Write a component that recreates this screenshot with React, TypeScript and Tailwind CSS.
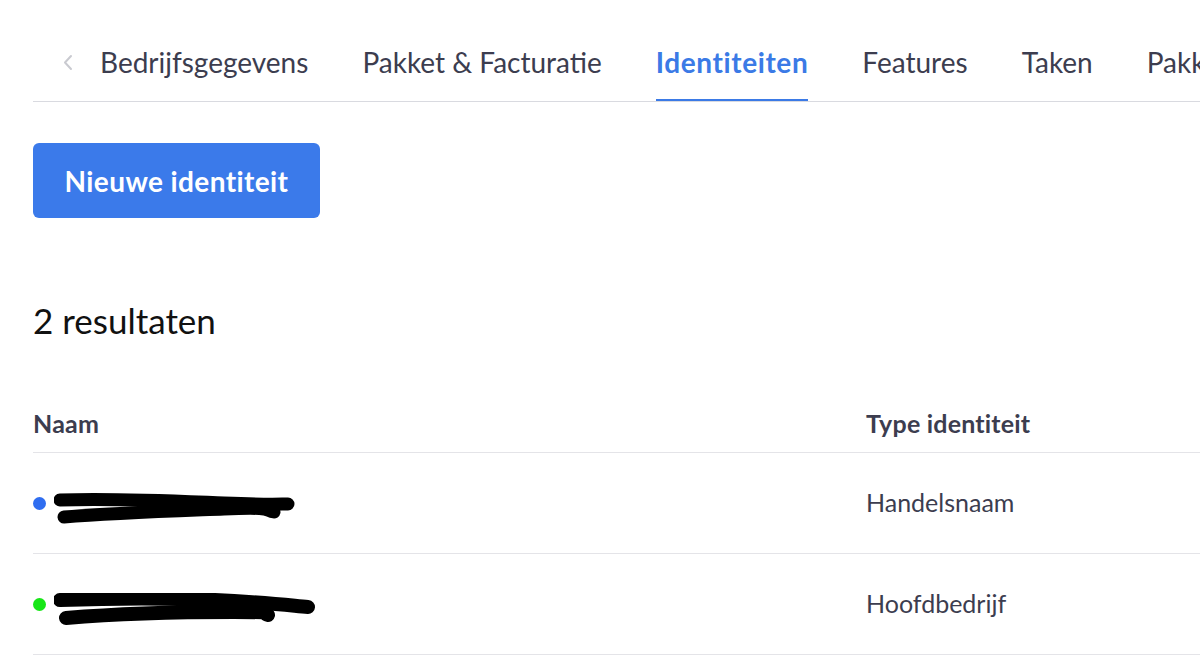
import React from "react";

function Scribble({ variant }: { variant: 1 | 2 }) {
  if (variant === 1) {
    return (
      <svg width="250" height="34" viewBox="0 0 250 34" className="block">
        <path d="M6 8 C 60 6, 120 9, 170 11 S 225 12, 234 12" stroke="#000" strokeWidth="13" strokeLinecap="round" fill="none" />
        <path d="M10 25 C 60 21, 120 19, 170 17 S 210 18, 220 20" stroke="#000" strokeWidth="13" strokeLinecap="round" fill="none" />
      </svg>
    );
  }
  return (
    <svg width="270" height="34" viewBox="0 0 270 34" className="block">
      <path d="M6 7 C 60 5, 130 5, 180 8 S 240 13, 254 14" stroke="#000" strokeWidth="14" strokeLinecap="round" fill="none" />
      <path d="M12 25 C 60 21, 130 19, 180 19 S 205 20, 214 22" stroke="#000" strokeWidth="14" strokeLinecap="round" fill="none" />
    </svg>
  );
}

export default function App() {
  const tabs = ["Bedrijfsgegevens", "Pakket & Facturatie", "Identiteiten", "Features", "Taken", "Pakketten"];
  return (
    <div className="w-[1200px] h-[669px] overflow-hidden bg-white pl-[33px]" style={{ fontFamily: "Lato, 'Noto Sans', sans-serif" }}>
      {/* Tabs */}
      <div className="flex items-stretch h-[102px] border-b border-[#d9dae0] overflow-hidden">
        <div className="flex items-start pt-[54px] pl-[29px] pr-[27px]">
          <svg width="11" height="17" viewBox="0 0 11 17">
            <path d="M9 2 L3 8.5 L9 15" stroke="#c9cad0" strokeWidth="2" fill="none" strokeLinecap="round" strokeLinejoin="round" />
          </svg>
        </div>
        <div className="flex gap-[54px] whitespace-nowrap">
          {tabs.map((t) => {
            const active = t === "Identiteiten";
            return (
              <div
                key={t}
                className={
                  "flex items-start pt-[44px] text-[28px] leading-[36px] border-b-[3px] -mb-px " +
                  (active ? "text-[#3b7ae6] font-bold tracking-[0.6px] border-[#3b7ae6]" : "text-[#3c3d4f] border-transparent")
                }
              >
                {t}
              </div>
            );
          })}
        </div>
      </div>

      {/* Button */}
      <div className="mt-[41px]">
        <button className="h-[75px] w-[287px] rounded-[6px] bg-[#3b7aea] text-white text-[28px] font-bold tracking-[0.4px] flex items-center justify-center">
          Nieuwe identiteit
        </button>
      </div>

      {/* Results */}
      <div className="mt-[85px] text-[35px] text-[#111] leading-[35px]">2 resultaten</div>

      {/* Table */}
      <div className="mt-[57px]">
        <div className="flex h-[58px] items-center border-b border-[#e4e4e8] text-[25px] font-bold text-[#3c3d4f] tracking-[0.2px]">
          <div className="w-[833px]">Naam</div>
          <div>Type identiteit</div>
        </div>
        {[
          { dot: "#2f6df0", type: "Handelsnaam", v: 1 as const },
          { dot: "#17e617", type: "Hoofdbedrijf", v: 2 as const },
        ].map((r) => (
          <div key={r.type} className="flex h-[101px] items-center border-b border-[#e4e4e8] text-[25px] text-[#3c3d4f]">
            <div className="w-[833px] flex items-center">
              <span className="w-[13px] h-[13px] rounded-full" style={{ backgroundColor: r.dot }} />
              <span className="ml-[8px] mt-[12px]">
                <Scribble variant={r.v} />
              </span>
            </div>
            <div>{r.type}</div>
          </div>
        ))}
      </div>
    </div>
  );
}
